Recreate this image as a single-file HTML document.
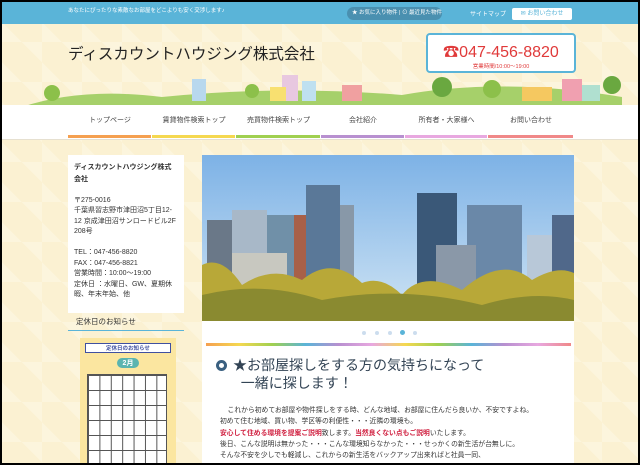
<!DOCTYPE html>
<html><head><meta charset="utf-8"><style>
*{margin:0;padding:0;box-sizing:border-box}
body{width:640px;height:465px;overflow:hidden;background:#000;font-family:"Liberation Sans","Noto Sans CJK JP",sans-serif}
#f{position:absolute;left:2px;top:2px;width:636px;height:461px;overflow:hidden;background:#fbf1d2;background-image:linear-gradient(45deg,rgba(255,255,255,.25) 25%,transparent 25%,transparent 75%,rgba(255,255,255,.25) 75%);background-size:40px 40px}
.top{position:absolute;left:0;top:0;width:636px;height:22px;background:#5ab4d8;color:#fff;font-size:6px;white-space:nowrap}
.abs{position:absolute}
.nav{position:absolute;left:0;top:103px;width:636px;height:35px;background:#fff;border-bottom:1px solid #e6e0d0}
.nav div{position:absolute;top:0;height:35px;font-size:7px;color:#444;text-align:center;line-height:32px}
.nav i{position:absolute;left:0;right:1px;bottom:2px;height:3px}
.side{position:absolute;left:66px;top:153px;width:116px;height:158px;background:#fff;font-size:7px;color:#333;padding:7px 6px;line-height:10.5px}
.main{position:absolute;left:200px;top:153px;width:372px;height:320px;background:#fff}
</style></head><body><div id="f">
<div class="top">
<div class="abs" style="left:66px;top:4px;font-size:5.5px">あなたにぴったりな素敵なお部屋をどこよりも安く交渉します♪</div>
<div class="abs" style="left:345px;top:5px;width:95px;height:13px;border-radius:7px;background:#4a90b0;font-size:5.5px;line-height:13px;padding-left:5px">★ お気に入り物件 | ⊙ 最近見た物件</div>
<div class="abs" style="left:468px;top:7px;font-size:6px">サイトマップ</div>
<div class="abs" style="left:510px;top:6px;width:60px;height:12px;background:#fff;color:#5ab4d8;font-size:6px;line-height:12px;text-align:center;border-radius:2px">✉ お問い合わせ</div>
</div>
<div class="abs" style="left:66px;top:40px;font-size:15.5px;color:#222">ディスカウントハウジング株式会社</div>
<div class="abs" style="left:424px;top:31px;width:150px;height:40px;background:#fff;border:2px solid #5ab4d8;border-radius:4px;text-align:center">
<div style="color:#e03a3a;font-size:16px;margin-top:3px">☎047-456-8820</div>
<div style="color:#e03a3a;font-size:5.5px">営業時間/10:00～19:00</div></div>
<svg class="abs" style="left:20px;top:65px" width="600" height="40">
<path d="M0 40 Q60 20 140 30 Q260 18 380 28 Q480 10 600 30 L600 40Z" fill="#a6d06a"/>
<rect x="170" y="12" width="14" height="22" fill="#b8d8ee"/><rect x="260" y="8" width="16" height="26" fill="#e8c8e0"/><rect x="280" y="14" width="14" height="20" fill="#bfe0f0"/><rect x="320" y="18" width="20" height="16" fill="#f0a0a0"/><rect x="248" y="20" width="16" height="14" fill="#f8e070"/><rect x="540" y="12" width="20" height="22" fill="#f0a0b0"/><rect x="560" y="18" width="18" height="16" fill="#b0e0d0"/><rect x="500" y="20" width="30" height="14" fill="#f5c860"/>
<circle cx="30" cy="26" r="8" fill="#8cc04a"/><circle cx="420" cy="20" r="10" fill="#6aa840"/><circle cx="470" cy="22" r="9" fill="#8cc04a"/><circle cx="230" cy="24" r="7" fill="#8cc04a"/><circle cx="590" cy="18" r="9" fill="#6aa840"/>
</svg>
<div class="nav">
<div style="left:66px;width:84px">トップページ<i style="background:#f5a050"></i></div>
<div style="left:150px;width:84px">賃貸物件検索トップ<i style="background:#f5d850"></i></div>
<div style="left:234px;width:85px">売買物件検索トップ<i style="background:#a0d050"></i></div>
<div style="left:319px;width:84px">会社紹介<i style="background:#b890d0"></i></div>
<div style="left:403px;width:83px">所有者・大家様へ<i style="background:#e8a8e0"></i></div>
<div style="left:486px;width:86px">お問い合わせ<i style="background:#f08888"></i></div>
</div>
<div class="side"><b style="font-size:7px;line-height:11px">ディスカウントハウジング株式会社</b><br><br>〒275-0016<br>千葉県習志野市津田沼5丁目12-12 京成津田沼サンロードビル2F 208号<br><br>TEL：047-456-8820<br>FAX：047-456-8821<br>営業時間：10:00～19:00<br>定休日 ：水曜日、GW、夏期休暇、年末年始、他</div>
<div class="abs" style="left:74px;top:314px;font-size:7.5px;color:#333">定休日のお知らせ</div>
<div class="abs" style="left:66px;top:328px;width:116px;height:1px;background:#5ab4d8"></div>
<div class="abs" style="left:78px;top:336px;width:96px;height:130px;background:#fbe6a0">
<div style="margin:5px 5px;border:1px solid #4050a0;background:#fff;font-size:5.5px;color:#4050a0;text-align:center;font-weight:bold">定休日のお知らせ</div>
<div style="margin:0 auto;width:22px;height:10px;border-radius:5px;background:#5ab4b0;color:#fff;font-size:7px;text-align:center;font-weight:bold">2月</div>
<div style="margin:6px 0 0 7px;width:80px;height:90px;background:#fff;border:1px solid #555;background-image:linear-gradient(#555 1px,transparent 1px),linear-gradient(90deg,#555 1px,transparent 1px);background-size:11.4px 15px"></div>
</div>
<div class="main">
<svg width="372" height="166" style="display:block">
<defs><linearGradient id="s" x1="0" y1="0" x2="0" y2="1"><stop offset="0" stop-color="#7db2e6"/><stop offset="1" stop-color="#cfe4f4"/></linearGradient></defs>
<rect width="372" height="166" fill="url(#s)"/>
<rect x="5" y="65" width="25" height="80" fill="#6a7888"/><rect x="30" y="55" width="35" height="90" fill="#a8b8c8"/><rect x="65" y="60" width="32" height="85" fill="#7090a8"/>
<rect x="92" y="60" width="42" height="86" fill="#a86048"/><rect x="104" y="30" width="34" height="115" fill="#5a7898"/><rect x="138" y="50" width="14" height="95" fill="#8898a8"/>
<rect x="215" y="38" width="40" height="108" fill="#3a5878"/><rect x="265" y="50" width="55" height="96" fill="#6a88a8"/><rect x="325" y="80" width="25" height="66" fill="#b8c8d8"/><rect x="350" y="60" width="22" height="86" fill="#50688a"/>
<rect x="234" y="90" width="40" height="55" fill="#8a98a8"/><rect x="30" y="98" width="55" height="48" fill="#c8c8c0"/>
<path d="M0 166 L0 110 Q20 100 40 130 Q70 110 100 125 Q130 100 160 128 Q180 120 200 140 Q220 115 260 135 Q300 100 330 125 Q355 110 372 118 L372 166Z" fill="#b8a838"/>
<path d="M0 166 L0 140 Q60 125 120 145 Q200 130 280 150 Q330 135 372 145 L372 166Z" fill="#8a8a30"/>
</svg>
<div style="position:absolute;top:175px;left:160px;width:60px;height:6px">
<span style="position:absolute;left:0;top:1px;width:4px;height:4px;border-radius:2px;background:#cde"></span><span style="position:absolute;left:13px;top:1px;width:4px;height:4px;border-radius:2px;background:#cde"></span><span style="position:absolute;left:26px;top:1px;width:4px;height:4px;border-radius:2px;background:#cde"></span><span style="position:absolute;left:38px;top:0;width:5px;height:5px;border-radius:3px;background:#5ab4d8"></span><span style="position:absolute;left:51px;top:1px;width:4px;height:4px;border-radius:2px;background:#cde"></span></div>
<div style="position:absolute;top:188px;left:4px;width:365px;height:3px;background:linear-gradient(90deg,#f5a050,#f5d850,#a0d050,#5ab4d8,#b890d0,#e8a8e0,#f5d850,#a0d050,#5ab4d8,#b890d0,#e8a8e0,#f08888)"></div>
<div style="position:absolute;top:205px;left:14px;width:11px;height:11px;border:3px solid #3a6080;border-radius:50%"></div>
<div style="position:absolute;top:201px;left:31px;font-size:14px;color:#345;line-height:18px">★お部屋探しをする方の気持ちになって<br>&nbsp;&nbsp;一緒に探します！</div>
<div style="position:absolute;top:250px;left:18px;font-size:6.8px;color:#333;line-height:11.3px;white-space:nowrap">&nbsp;&nbsp;&nbsp;&nbsp;これから初めてお部屋や物件探しをする時、どんな地域、お部屋に住んだら良いか、不安ですよね。<br>初めて住む地域、買い物、学区等の利便性・・・近隣の環境も。<br><b style="color:#d02040">安心して住める環境を提案ご説明</b>致します。<b style="color:#d02040">当然良くない点もご説明</b>いたします。<br>後日、こんな説明は無かった・・・こんな環境知らなかった・・・せっかくの新生活が台無しに。<br>そんな不安を少しでも軽減し、これからの新生活をバックアップ出来ればと社員一同、</div>
</div>
</div></body></html>
